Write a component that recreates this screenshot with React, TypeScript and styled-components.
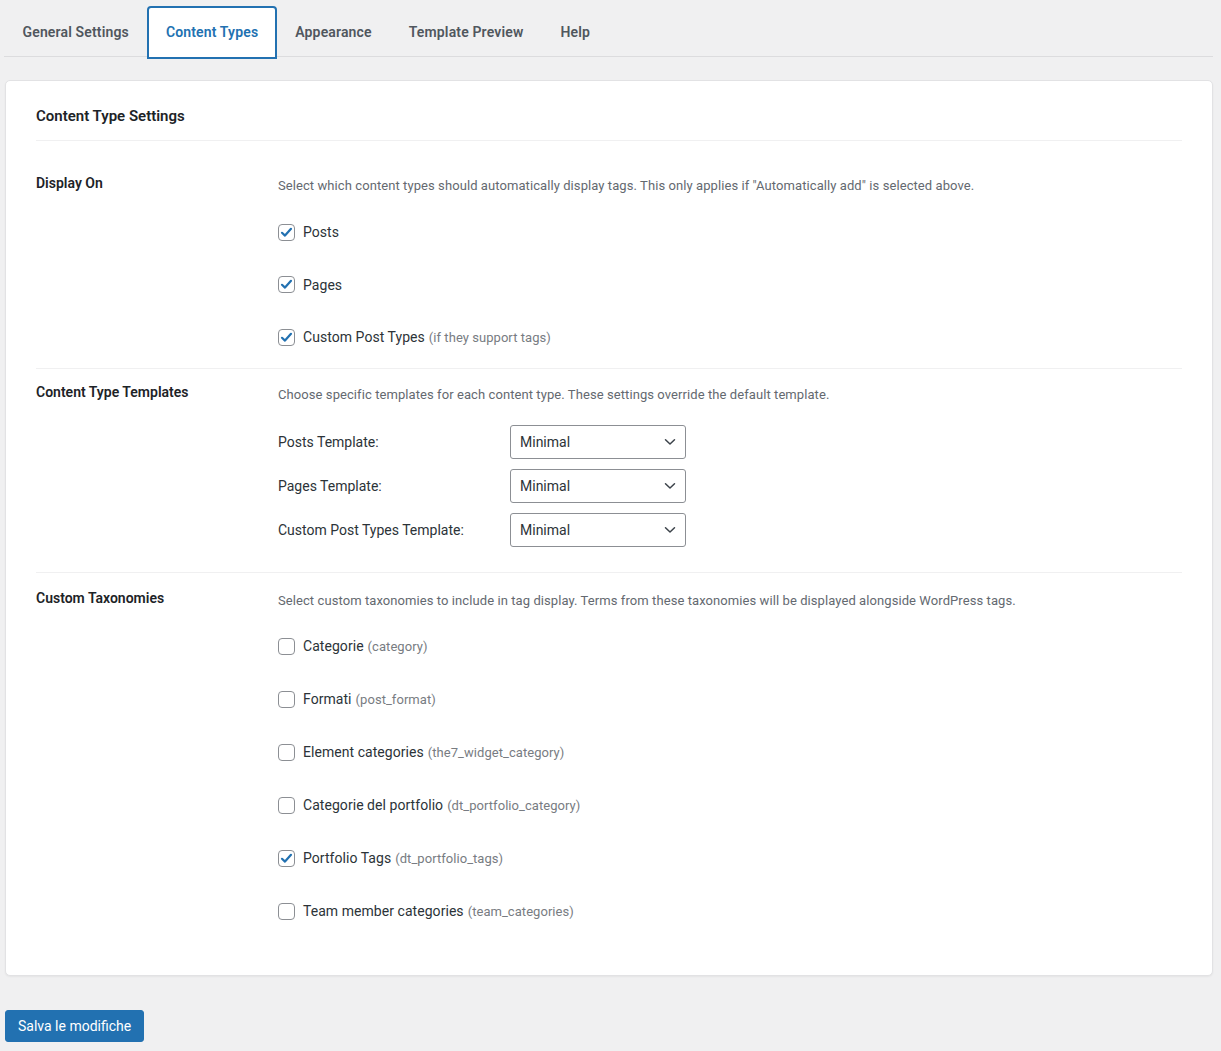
import React from "react";
import styled, { createGlobalStyle } from "styled-components";

const GlobalStyle = createGlobalStyle`
  html, body { margin: 0; padding: 0; background: #f0f0f1; }
  body { font-family: Roboto, "Liberation Sans", Arial, sans-serif; color: #1d2327; }
  * { box-sizing: border-box; }
`;

const Page = styled.div`
  padding: 0 8px 10px 5px;
`;

const TabNav = styled.nav`
  display: flex;
  align-items: flex-end;
  padding-top: 6px;
  border-bottom: 1px solid #dcdcde;
  margin-left: -1px;
`;

const Tab = styled.div<{ $active?: boolean }>`
  padding: 14px 16.5px 15px;
  border: 2px solid ${(p) => (p.$active ? "#2271b1" : "transparent")};
  border-radius: 4px 4px 0 0;
  margin-bottom: -3px;
  background: ${(p) => (p.$active ? "#fff" : "transparent")};
  color: ${(p) => (p.$active ? "#2271b1" : "#50575e")};
  font-size: 14px;
  font-weight: 600;
  line-height: 20px;
  letter-spacing: 0.15px;
  white-space: nowrap;
`;

const Card = styled.section`
  margin-top: 23px;
  background: #fff;
  border: 1px solid #e2e2e4;
  border-radius: 5px;
  box-shadow: 0 1px 2px rgba(0, 0, 0, 0.05);
  padding: 25px 30px 30px;
`;

const CardTitle = styled.h2`
  margin: 0 0 18px;
  padding-bottom: 14px;
  border-bottom: 1px solid #f0f0f1;
  font-size: 15px;
  line-height: 20px;
  font-weight: 600;
  color: #1d2327;
`;

const Section = styled.div<{ $top: number; $bottom: number; $last?: boolean }>`
  display: grid;
  grid-template-columns: 242px 1fr;
  padding: ${(p) => p.$top}px 0 ${(p) => p.$bottom}px;
  border-bottom: ${(p) => (p.$last ? "none" : "1px solid #f0f0f1")};
`;

const SectionLabel = styled.div`
  font-size: 14px;
  line-height: 20px;
  font-weight: 600;
  color: #1d2327;
`;

const SectionBody = styled.div`
  padding-top: 4px;
`;

const Description = styled.p`
  margin: 0;
  font-size: 13px;
  line-height: 18px;
  letter-spacing: 0.08px;
  color: #646970;
`;

const CheckList = styled.div<{ $gap: number; $top: number }>`
  display: flex;
  flex-direction: column;
  gap: ${(p) => p.$gap}px;
  margin-top: ${(p) => p.$top}px;
`;

const CheckRow = styled.label`
  display: flex;
  align-items: center;
  gap: 8px;
  height: 20px;
  font-size: 14px;
  letter-spacing: 0.05px;
  color: #2c3338;
`;

const Box = styled.span`
  width: 17px;
  height: 17px;
  border: 1px solid #8c8f94;
  border-radius: 4px;
  background: #fff;
  display: inline-flex;
  align-items: center;
  justify-content: center;
  flex: none;
`;

const Hint = styled.span`
  font-size: 13px;
  color: #787c82;
  margin-left: 4px;
`;

const SelectGrid = styled.div`
  display: grid;
  grid-template-columns: 232px 176px;
  row-gap: 10px;
  align-items: center;
  margin-top: 21px;
`;

const FieldLabel = styled.span`
  font-size: 14px;
  color: #2c3338;
`;

const SelectBox = styled.div`
  height: 34px;
  border: 1px solid #8c8f94;
  border-radius: 3px;
  display: flex;
  align-items: center;
  justify-content: space-between;
  padding: 0 9px 0 9px;
  font-size: 14px;
  color: #2c3338;
  background: #fff;
`;

const SaveButton = styled.button`
  margin-top: 34px;
  height: 32px;
  padding: 0 12px;
  background: #2271b1;
  border: 1px solid #2271b1;
  border-radius: 3px;
  color: #fff;
  font-family: Roboto, "Liberation Sans", Arial, sans-serif;
  font-size: 14px;
  line-height: 30px;
`;

const Check = ({ checked }: { checked?: boolean }) => (
  <Box>
    {checked && (
      <svg width="13" height="13" viewBox="0 0 13 13">
        <path d="M2 6.8 L5 9.6 L11 2.8" fill="none" stroke="#2271b1" strokeWidth="2.2" strokeLinecap="round" strokeLinejoin="round" />
      </svg>
    )}
  </Box>
);

const Chevron = () => (
  <svg width="12" height="8" viewBox="0 0 12 8">
    <path d="M1.5 1.8 L6 6 L10.5 1.8" fill="none" stroke="#3c434a" strokeWidth="1.5" strokeLinecap="round" strokeLinejoin="round" />
  </svg>
);

const tabs = ["General Settings", "Content Types", "Appearance", "Template Preview", "Help"];

const displayOn: { label: string; hint?: string; checked: boolean }[] = [
  { label: "Posts", checked: true },
  { label: "Pages", checked: true },
  { label: "Custom Post Types", hint: "(if they support tags)", checked: true },
];

const templates = ["Posts Template:", "Pages Template:", "Custom Post Types Template:"];

const taxonomies: { label: string; hint: string; checked: boolean }[] = [
  { label: "Categorie", hint: "(category)", checked: false },
  { label: "Formati", hint: "(post_format)", checked: false },
  { label: "Element categories", hint: "(the7_widget_category)", checked: false },
  { label: "Categorie del portfolio", hint: "(dt_portfolio_category)", checked: false },
  { label: "Portfolio Tags", hint: "(dt_portfolio_tags)", checked: true },
  { label: "Team member categories", hint: "(team_categories)", checked: false },
];

export default function App() {
  return (
    <Page>
      <GlobalStyle />
      <TabNav>
        {tabs.map((t) => (
          <Tab key={t} $active={t === "Content Types"}>
            {t}
          </Tab>
        ))}
      </TabNav>
      <Card>
        <CardTitle>Content Type Settings</CardTitle>
        <Section $top={14} $bottom={21}>
          <SectionLabel>Display On</SectionLabel>
          <SectionBody>
            <Description>
              Select which content types should automatically display tags. This only applies if "Automatically add" is selected above.
            </Description>
            <CheckList $gap={32.5} $top={27}>
              {displayOn.map((o) => (
                <CheckRow key={o.label}>
                  <Check checked={o.checked} />
                  <span>
                    {o.label}
                    {o.hint && <Hint>{o.hint}</Hint>}
                  </span>
                </CheckRow>
              ))}
            </CheckList>
          </SectionBody>
        </Section>
        <Section $top={13} $bottom={25}>
          <SectionLabel>Content Type Templates</SectionLabel>
          <SectionBody>
            <Description>
              Choose specific templates for each content type. These settings override the default template.
            </Description>
            <SelectGrid>
              {templates.map((t) => (
                <React.Fragment key={t}>
                  <FieldLabel>{t}</FieldLabel>
                  <SelectBox>
                    <span>Minimal</span>
                    <Chevron />
                  </SelectBox>
                </React.Fragment>
              ))}
            </SelectGrid>
          </SectionBody>
        </Section>
        <Section $top={15} $bottom={24} $last>
          <SectionLabel>Custom Taxonomies</SectionLabel>
          <SectionBody>
            <Description>
              Select custom taxonomies to include in tag display. Terms from these taxonomies will be displayed alongside WordPress tags.
            </Description>
            <CheckList $gap={33} $top={26}>
              {taxonomies.map((o) => (
                <CheckRow key={o.label}>
                  <Check checked={o.checked} />
                  <span>
                    {o.label}
                    <Hint>{o.hint}</Hint>
                  </span>
                </CheckRow>
              ))}
            </CheckList>
          </SectionBody>
        </Section>
      </Card>
      <SaveButton>Salva le modifiche</SaveButton>
    </Page>
  );
}
